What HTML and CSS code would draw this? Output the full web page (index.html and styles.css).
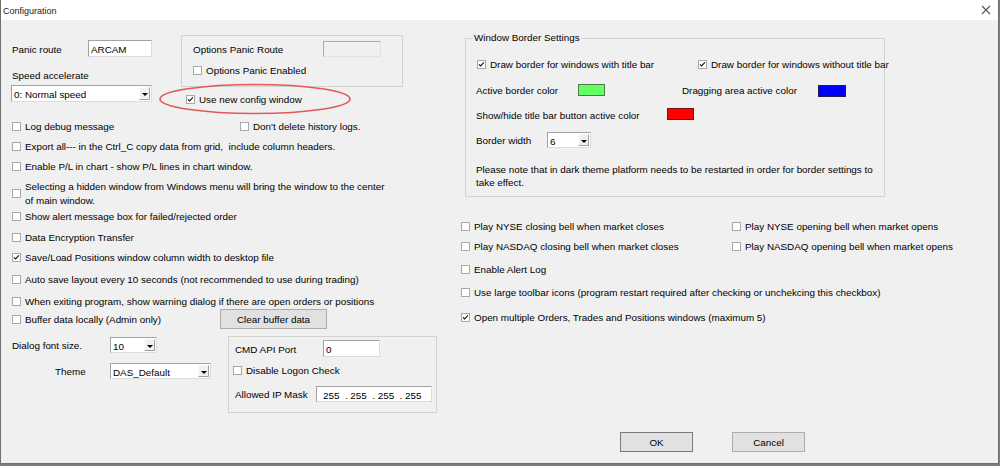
FILE: index.html
```html
<!DOCTYPE html>
<html>
<head>
<meta charset="utf-8">
<title>Configuration</title>
<link rel="stylesheet" href="styles.css">
</head>
<body>
<div class="window">
  <div class="titlebar">
    <span class="title">Configuration</span>
    <svg class="close" width="10" height="10" viewBox="0 0 10 10"><path d="M1 1L9 9M9 1L1 9" stroke="#555" stroke-width="1.1" fill="none"/></svg>
  </div>
  <div class="body">
    <div class="left">
      <div class="top">
        <div class="top-a">
          <div class="row panic"><span class="w76">Panic route</span><div class="input w64">ARCAM</div></div>
          <div class="speed-lbl">Speed accelerate</div>
          <div class="select speed">0: Normal speed<span class="arrow"></span></div>
        </div>
        <div class="top-b">
          <div class="group opt-group">
            <div class="row opt-row"><span class="w130">Options Panic Route</span><div class="input disabled w58"></div></div>
            <div class="cb mt6"><span class="box"></span><span>Options Panic Enabled</span></div>
          </div>
          <div class="cb cb-use"><span class="box checked"><svg viewBox="0 0 9 9" width="7" height="7"><path d="M1.2 4.2L3.3 6.4L7.6 1.8" stroke="#111" stroke-width="1.4" fill="none"/></svg></span><span>Use new config window</span></div>
        </div>
      </div>

      <div class="row mt7">
        <div class="cb w228"><span class="box"></span><span>Log debug message</span></div>
        <div class="cb"><span class="box"></span><span>Don't delete history logs.</span></div>
      </div>
      <div class="cb mt6"><span class="box"></span><span>Export all--- in the Ctrl_C copy data from grid,&nbsp; include column headers.</span></div>
      <div class="cb mt6"><span class="box"></span><span>Enable P/L in chart - show P/L lines in chart window.</span></div>
      <div class="cb two mt6"><span class="box"></span><span>Selecting a hidden window from Windows menu will bring the window to the center<br>of main window.</span></div>
      <div class="cb mt2"><span class="box"></span><span>Show alert message box for failed/rejected order</span></div>
      <div class="cb mt7"><span class="box"></span><span>Data Encryption Transfer</span></div>
      <div class="cb mt6"><span class="box checked"><svg viewBox="0 0 9 9" width="7" height="7"><path d="M1.2 4.2L3.3 6.4L7.6 1.8" stroke="#111" stroke-width="1.4" fill="none"/></svg></span><span>Save/Load Positions window column width to desktop file</span></div>
      <div class="cb mt8"><span class="box"></span><span>Auto save layout every 10 seconds (not recommended to use during trading)</span></div>
      <div class="cb mt8"><span class="box"></span><span>When exiting program, show warning dialog if there are open orders or positions</span></div>
      <div class="row buffer-row">
        <div class="cb w208"><span class="box"></span><span>Buffer data locally (Admin only)</span></div>
        <div class="button clear-btn">Clear buffer data</div>
      </div>

      <div class="bottom">
        <div class="bot-a">
          <div class="row"><span class="w98">Dialog font size.</span><div class="select font-sel">10<span class="arrow"></span></div></div>
          <div class="row theme-row"><span class="theme-lbl">Theme</span><div class="select theme-sel">DAS_Default<span class="arrow"></span></div></div>
        </div>
        <div class="group cmd-group">
          <div class="row cmd-row"><span class="w88">CMD API Port</span><div class="input w57">0</div></div>
          <div class="cb logon"><span class="box"></span><span>Disable Logon Check</span></div>
          <div class="row ip-row"><span class="w81">Allowed IP Mask</span><div class="input ip">255&nbsp; .&nbsp;255&nbsp; .&nbsp;255&nbsp; .&nbsp;255</div></div>
        </div>
      </div>
    </div>

    <div class="right">
      <div class="group wbs">
        <span class="legend">Window Border Settings</span>
        <div class="row wbs-r1">
          <div class="cb w221"><span class="box checked"><svg viewBox="0 0 9 9" width="7" height="7"><path d="M1.2 4.2L3.3 6.4L7.6 1.8" stroke="#111" stroke-width="1.4" fill="none"/></svg></span><span>Draw border for windows with title bar</span></div>
          <div class="cb"><span class="box checked"><svg viewBox="0 0 9 9" width="7" height="7"><path d="M1.2 4.2L3.3 6.4L7.6 1.8" stroke="#111" stroke-width="1.4" fill="none"/></svg></span><span>Draw border for windows without title bar</span></div>
        </div>
        <div class="row wbs-r2">
          <span class="w102">Active border color</span><span class="swatch green"></span>
          <span class="drag-lbl">Dragging area active color</span><span class="swatch blue"></span>
        </div>
        <div class="row wbs-r3">
          <span class="w191">Show/hide title bar button active color</span><span class="swatch red"></span>
        </div>
        <div class="row wbs-r4">
          <span class="w71">Border width</span><div class="select bw-sel">6<span class="arrow"></span></div>
        </div>
        <p class="note">Please note that in dark theme platform needs to be restarted in order for border settings to<br>take effect.</p>
      </div>

      <div class="row r-mt">
        <div class="cb w271"><span class="box"></span><span>Play NYSE closing bell when market closes</span></div>
        <div class="cb"><span class="box"></span><span>Play NYSE opening bell when market opens</span></div>
      </div>
      <div class="row mt6">
        <div class="cb w271"><span class="box"></span><span>Play NASDAQ closing bell when market closes</span></div>
        <div class="cb"><span class="box"></span><span>Play NASDAQ opening bell when market opens</span></div>
      </div>
      <div class="cb mt9"><span class="box"></span><span>Enable Alert Log</span></div>
      <div class="cb mt9"><span class="box"></span><span>Use large toolbar icons (program restart required after checking or unchekcing this checkbox)</span></div>
      <div class="cb mt11"><span class="box checked"><svg viewBox="0 0 9 9" width="7" height="7"><path d="M1.2 4.2L3.3 6.4L7.6 1.8" stroke="#111" stroke-width="1.4" fill="none"/></svg></span><span>Open multiple Orders, Trades and Positions windows (maximum 5)</span></div>

      <div class="row buttons">
        <div class="button default">OK</div>
        <div class="button">Cancel</div>
      </div>
    </div>
  </div>
  <svg class="ellipse" width="198" height="36" viewBox="0 0 198 36"><ellipse cx="98" cy="17" rx="95" ry="14.5" fill="none" stroke="#e05a5a" stroke-width="1.6"/></svg>
</div>
</body>
</html>
```

FILE: styles.css
```css
* { box-sizing: border-box; }
html, body { margin: 0; padding: 0; }
body {
  width: 1000px;
  height: 466px;
  overflow: hidden;
  background: #7d7d7d;
  font-family: "Liberation Sans", Arial, sans-serif;
  font-size: 9.85px;
  line-height: 14px;
  color: #000;
}
.window {
  position: relative;
  width: 999px;
  height: 464px;
  background: #f0f0f0;
  border-left: 1px solid #707070;
  border-right: 1px solid #707070;
  border-bottom: 1px solid #707070;
}
.titlebar {
  height: 20px;
  background: #fff;
  display: flex;
  align-items: center;
  justify-content: space-between;
  padding: 0 7px 0 2px;
}
.title { font-family: "Liberation Sans", Arial, sans-serif; font-size: 9px; color: #1a1a1a; padding-top: 1px; }
.close { display: block; }
.body { display: flex; }
.left { width: 460px; padding-left: 11px; }
.right { flex: 1; }

.row { display: flex; align-items: center; }
.row > span:not(.swatch), .cb > span:last-child, .speed-lbl { padding-top: 2px; }
.cb { display: flex; align-items: center; height: 14px; white-space: nowrap; }
.cb.two { height: 28px; }
.box {
  flex: none;
  width: 9px;
  height: 9px;
  margin-right: 4px;
  background: #fff;
  border: 1px solid #a8a8a8;
  display: flex;
  align-items: center;
  justify-content: center;
}
.box svg { display: block; }

.mt2 { margin-top: 2px; }
.mt6 { margin-top: 6px; }
.mt7 { margin-top: 7px; }
.mt8 { margin-top: 8px; }
.mt9 { margin-top: 9px; }
.mt11 { margin-top: 11px; }

.w58 { width: 58px; }
.w57 { width: 57px; }
.w64 { width: 64px; }
.w71 { width: 71px; flex: none; }
.w76 { width: 76px; flex: none; }
.w81 { width: 81px; flex: none; }
.w88 { width: 88px; flex: none; }
.w98 { width: 98px; flex: none; }
.w102 { width: 102px; flex: none; }
.w130 { width: 130px; flex: none; }
.w191 { width: 191px; flex: none; }
.w208 { width: 208px; flex: none; }
.w221 { width: 221px; flex: none; }
.w228 { width: 228px; flex: none; }
.w271 { width: 271px; flex: none; }

.input, .select {
  height: 17px;
  background: #fff;
  border: 1px solid;
  border-color: #a3a3a3 #dcdcdc #dcdcdc #a3a3a3;
  padding: 1px 2px 0;
  line-height: 15px;
  white-space: nowrap;
  overflow: hidden;
}
.input.disabled { background: #f0f0f0; border-color: #a9a9a9 #e3e3e3 #e3e3e3 #a9a9a9; height: 16px; }
.select { position: relative; }
.arrow {
  position: absolute;
  right: 1px;
  top: 1px;
  bottom: 1px;
  width: 11px;
  background: #f0f0f0;
  border: 1px solid;
  border-color: #fafafa #a0a0a0 #a0a0a0 #fafafa;
}
.arrow::after {
  content: "";
  position: absolute;
  left: 2px;
  top: 5px;
  border-top: 3px solid #000;
  border-left: 3px solid transparent;
  border-right: 3px solid transparent;
}
.group { border: 1px solid #d2d2d2; }
.button {
  display: flex;
  align-items: center;
  justify-content: center;
  height: 20px;
  padding-top: 2px;
  background: #e1e1e1;
  border: 1px solid #adadad;
}
.button.default { border-color: #7a7a7a; }

/* top-left */
.top { display: flex; height: 92px; }
.top-a { width: 169px; padding-top: 20px; }
.panic { height: 17px; }
.speed-lbl { margin-top: 11px; height: 14px; line-height: 12px; }
.speed { margin-top: 3px; margin-left: -1px; width: 141px; }
.opt-group { margin-top: 15px; width: 222px; height: 52px; padding: 5px 0 0 11px; }
.opt-row { height: 16px; }
.cb-use { margin-top: 5px; margin-left: 5px; }

.buffer-row { height: 20px; margin-top: 1px; }
.clear-btn { width: 107px; }

/* bottom-left */
.bottom { display: flex; }
.bot-a { width: 216px; padding-top: 8px; }
.font-sel { width: 47px; height: 16px; }
.theme-row { margin-top: 10px; }
.theme-lbl { width: 98px; padding-left: 43px; flex: none; }
.theme-sel { width: 101px; height: 16px; }
.cmd-group { margin-top: 7px; width: 209px; height: 77px; padding: 3px 0 0 6px; }
.cmd-row { height: 17px; }
.logon { margin-top: 6px; margin-left: -2px; }
.ip-row { margin-top: 9px; height: 16px; }
.ip { width: 116px; height: 16px; padding-left: 6px; }

/* right */
.wbs { position: relative; margin: 18px 0 0 4px; width: 420px; height: 159px; padding-left: 10px; }
.legend { position: absolute; left: 7px; top: -7px; padding: 0 1px; background: #f0f0f0; line-height: 12px; }
.wbs-r1 { margin-top: 18px; margin-left: 1px; height: 14px; }
.wbs-r2 { margin-top: 12px; height: 14px; }
.wbs-r3 { margin-top: 11px; height: 14px; }
.wbs-r4 { margin-top: 10px; height: 16px; }
.swatch { width: 27px; height: 12px; border: 1px solid #555; flex: none; }
.swatch.green { background: #66ff66; border-color: #4a7a4a; }
.swatch.blue { background: #0000ff; border-color: #202050; margin-top: 2px; width: 28px; }
.swatch.red { background: #ff0000; border-color: #7a1010; margin-top: -2px; }
.drag-lbl { width: 136px; margin-left: 77px; flex: none; }
.bw-sel { width: 44px; height: 16px; }
.note { margin: 15px 0 0; line-height: 13px; }
.r-mt { margin-top: 22px; }
.buttons { margin-top: 108px; padding-left: 159px; gap: 39px; }
.buttons .button { width: 73px; }

.ellipse { position: absolute; left: 156px; top: 82px; }
```
